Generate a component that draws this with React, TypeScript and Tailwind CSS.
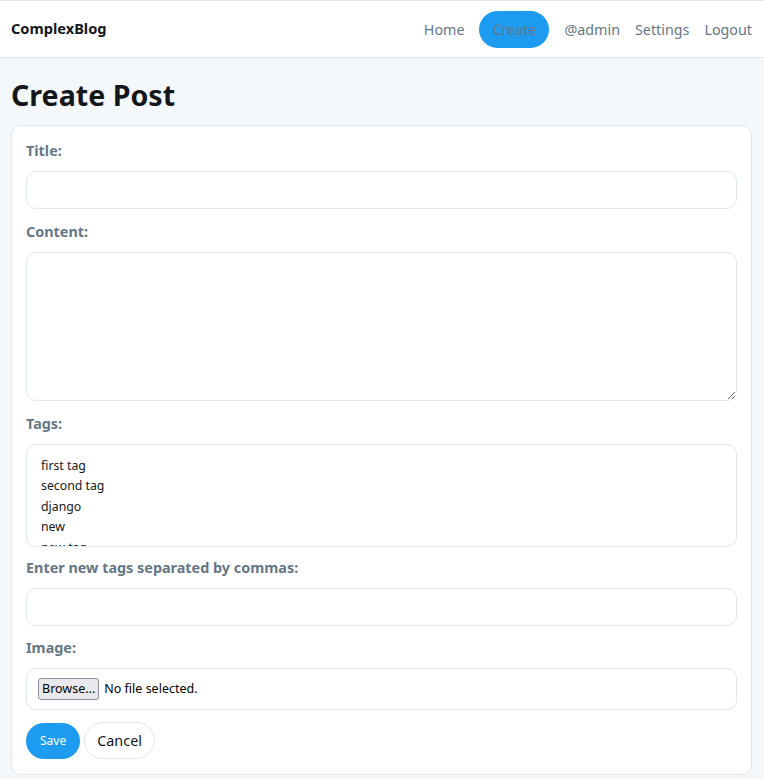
import React from "react";

const navItems = [
  { name: "Home", active: false },
  { name: "Create", active: true },
  { name: "@admin", active: false },
  { name: "Settings", active: false },
  { name: "Logout", active: false },
];

const tags = ["first tag", "second tag", "django", "new", "new tag"];

function Label({ children }: { children: React.ReactNode }) {
  return (
    <label className="block text-[14.4px] leading-[21px] font-bold text-[#657786] mb-[10px]">
      {children}
    </label>
  );
}

export default function App() {
  return (
    <div
      className="min-h-[779px] bg-[#f5f8fa] text-[#14171a]"
      style={{ fontFamily: '"Noto Sans", "Open Sans", sans-serif' }}
    >
      {/* Navbar */}
      <nav className="h-[58px] bg-white border-t border-b border-[#e1e8ed] flex items-center justify-between pl-[11px] pr-[12px]">
        <span className="font-bold text-[14.6px] text-[#14171a]">ComplexBlog</span>
        <div className="flex items-center gap-[15px] pt-[1px]">
          {navItems.map((item) =>
            item.active ? (
              <a
                key={item.name}
                className="h-[37px] flex items-center px-[13px] rounded-full bg-[#1d9bf0] text-[14.3px] text-[#657786]"
              >
                {item.name}
              </a>
            ) : (
              <a key={item.name} className="text-[14.3px] text-[#657786]">
                {item.name}
              </a>
            )
          )}
        </div>
      </nav>

      <main className="pl-[11px] pr-[12px]">
        <h1 className="text-[28.6px] leading-[39px] font-bold pt-[17px] pb-[11px]">Create Post</h1>

        <form className="bg-white border border-[#e1e8ed] rounded-[10px] px-[14px] pt-[14px] pb-[15px] flex flex-col">
          <div>
            <Label>Title:</Label>
            <input className="block w-full h-[38px] border border-[#e1e8ed] rounded-[10px] px-3 outline-none" />
          </div>
          <div className="mt-[12px]">
            <Label>Content:</Label>
            <textarea className="block w-full h-[149px] border border-[#e1e8ed] rounded-[10px] px-3 py-2 outline-none resize-y" />
          </div>
          <div className="mt-[12px]">
            <Label>Tags:</Label>
            <div className="h-[103px] border border-[#e1e8ed] rounded-[10px] overflow-hidden pl-[14px] pt-[11px]">
              {tags.map((t) => (
                <div key={t} className="text-[12.3px] leading-[20.4px] text-[#14171a]">
                  {t}
                </div>
              ))}
            </div>
          </div>
          <div className="mt-[10px]">
            <Label>Enter new tags separated by commas:</Label>
            <input className="block w-full h-[38px] border border-[#e1e8ed] rounded-[10px] px-3 outline-none" />
          </div>
          <div className="mt-[11px]">
            <Label>Image:</Label>
            <div className="h-[42px] border border-[#e1e8ed] rounded-[10px] flex items-center pl-[11px] gap-[5px] text-[12.5px]">
              <span className="h-[22px] px-[3px] flex items-center border border-[#8f8f9d] rounded-[3px] bg-[#e9e9ed] text-black">
                Browse...
              </span>
              <span className="text-black">No file selected.</span>
            </div>
          </div>
          <div className="mt-[12px] flex items-center gap-[4px]">
            <button
              type="button"
              className="h-[36px] px-[14px] rounded-full bg-[#1d9bf0] text-white text-[12px]"
            >
              Save
            </button>
            <button
              type="button"
              className="h-[37px] px-[12px] rounded-full bg-white border border-[#e1e8ed] text-[14.4px] text-[#14171a]"
            >
              Cancel
            </button>
          </div>
        </form>
      </main>
    </div>
  );
}
